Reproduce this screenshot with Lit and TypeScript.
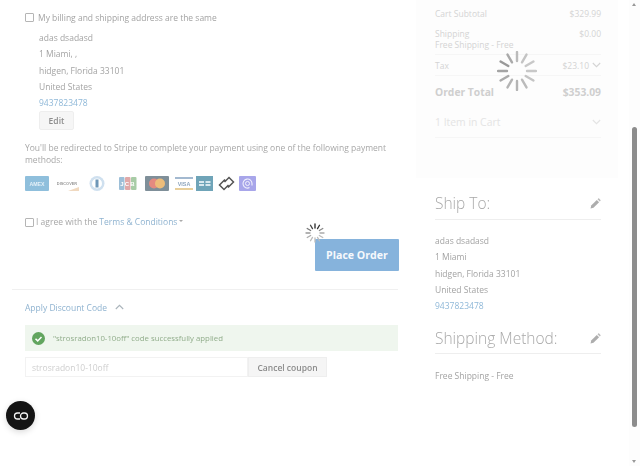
import { LitElement, html, css, svg } from 'lit';
import { customElement } from 'lit/decorators.js';

const spokes = (size: number, w: number, inner: number, outer: number, colors: string[]) => {
  const c = size / 2;
  return html`<svg width=${size} height=${size} viewBox="0 0 ${size} ${size}">
    ${colors.map((col, i) => svg`<line x1=${c} y1=${c - inner} x2=${c} y2=${c - outer} stroke=${col}
      stroke-width=${w} stroke-linecap="round" transform="rotate(${i * 30} ${c} ${c})"></line>`)}
  </svg>`;
};

const pencil = html`<svg class="pencil" width="11" height="11" viewBox="0 0 11 11">
  <path d="M0.5 10.5l.7-3 5.6-5.6 2.3 2.3-5.6 5.6z" fill="#adadad"></path>
  <path d="M7.5 1.2l.8-.7c.3-.2.6-.2.8 0l1.4 1.4c.2.2.2.5 0 .8l-.7.8z" fill="#bbb"></path>
</svg>`;

const chevron = (up = false) => html`<svg width="9" height="6" viewBox="0 0 9 6" style=${up ? 'transform:rotate(180deg)' : ''}>
  <path d="M.8 1l3.7 3.7L8.2 1" fill="none" stroke="currentColor" stroke-width="1.1"></path>
</svg>`;

@customElement('app-root')
class AppRoot extends LitElement {
  static styles = css`
    :host {
      display: block;
      width: 640px;
      height: 466px;
      position: relative;
      overflow: hidden;
      background: #fff;
      font-family: "Open Sans", sans-serif;
      font-size: 8.5px;
      color: #a3a3a3;
    }
    .page { display: flex; height: 466px; filter: blur(0.45px); }
    .main { width: 416px; flex: none; padding: 0 18px 0 12px; box-sizing: border-box; }
    .same { display: flex; align-items: center; gap: 4px; margin: 12px 0 0 13px; height: 11px; }
    .box { width: 7px; height: 7px; border: 1px solid #b5b5b5; border-radius: 1px; flex: none; background: #fff; }
    .addr { margin: 7px 0 0 27px; line-height: 16.3px; }
    .addr a, .ship a { color: #8fb8d8; display: block; }
    .edit { width: 35px; height: 19px; box-sizing: border-box; border: 1px solid #eee; background: #f6f6f6;
      border-radius: 2px; color: #8d8d8d; font-weight: 600; display: flex; align-items: center; justify-content: center; }
    .note { margin: 12px 0 0 13px; line-height: 12px; width: 372px; color: #a8a8a8; }
    .pay { display: flex; align-items: center; margin: 9px 0 0 13px; height: 16px; }
    .pay svg { display: block; flex: none; }
    .agree { display: flex; align-items: center; gap: 2px; margin: 23px 0 0 13px; height: 14px; color: #a6a6a6; }
    .agree a { color: #8fb3d0; }
    .agree .box { margin-top: 2px; }
    .caret { border: 2px solid transparent; border-top-color: #aaa; border-bottom: 0; }
    .actions { display: flex; justify-content: flex-end; margin: 11px -1px 0 0; position: relative; }
    .place { width: 84px; height: 32px; background: #86b3dc; color: #f6f9fc; font-weight: 700; font-size: 10.6px;
      border-radius: 1px; display: flex; align-items: center; justify-content: center; }
    .spin-small { position: absolute; left: 292px; top: -17px; }
    .rule { height: 1px; background: #f0f0f0; margin-top: 18px; }
    .disc-toggle { display: flex; align-items: center; gap: 8px; margin: 10px 0 0 13px; height: 14px; color: #8fb3d0; }
    .disc-toggle svg { color: #aab4bb; }
    .ok { display: flex; align-items: center; gap: 8px; height: 26px; margin: 11px 0 0 13px; padding-left: 7px; background: #eff6ee;
      color: #91ad8b; font-size: 7.8px; }
    .coupon { display: flex; margin: 6px 0 0 13px; height: 20px; }
    .field { width: 223px; box-sizing: border-box; border: 1px solid #f2f2f2; padding-left: 6px; display: flex; align-items: center; color: #cfcfcf; }
    .cancel { width: 79px; box-sizing: border-box; background: #f5f5f5; border: 1px solid #eee; color: #8b8b8b; font-weight: 600;
      display: flex; align-items: center; justify-content: center; }
    .side { width: 202px; flex: none; }
    .summary { position: relative; height: 178px; background: #fdfdfd; padding: 0 17px 0 19px; box-sizing: border-box; color: #d4d4d4; }
    .row { display: flex; justify-content: space-between; align-items: center; }
    .row span { display: flex; align-items: center; gap: 3px; }
    .subtotal { padding-top: 7px; height: 12px; }
    .shipping { margin-top: 8px; height: 12px; }
    .free { line-height: 12px; padding-bottom: 3px; border-bottom: 1px solid #f6f6f6; }
    .tax { height: 20px; border-bottom: 1px solid #f6f6f6; }
    .total { height: 31px; font-size: 10.3px; font-weight: 700; color: #cfcfcf; }
    .items { height: 30px; font-size: 10.4px; color: #e4e4e4; border-bottom: 1px solid #f6f6f6; }
    .spin-big { position: absolute; left: 81px; top: 51px; }
    .ship { padding: 0 17px 0 19px; }
    .head { display: flex; align-items: center; justify-content: space-between; border-bottom: 1px solid #eee; font-size: 15.5px;
      font-weight: 300; color: #a8a8a8; box-sizing: border-box; padding-right: 1px; }
    .head.first { margin-top: 8px; height: 34px; }
    .pencil { margin: 2px -1px 0 0; }
    .lines { margin-top: 13px; line-height: 16.3px; }
    .method { height: 40px; padding-top: 8px; }
    .free-line { margin-top: 16px; line-height: 12px; }
    .chat { position: absolute; left: 6px; top: 401px; width: 29px; height: 29px; border-radius: 50%; background: #141414;
      box-shadow: 0 2px 6px rgba(0, 0, 0, .15); display: flex; align-items: center; justify-content: center; }
    .scroll { position: absolute; right: 0; top: 0; width: 11px; height: 466px; background: #fdfdfd; }
    .thumb { position: absolute; left: 3px; top: 127px; width: 5px; height: 300px; border-radius: 3px; background: #8c8c8c; }
    .arrow { position: absolute; left: 3px; border: 2.5px solid transparent; }
    .arrow.up { top: 3px; border-bottom: 3px solid #999; border-top: 0; }
    .arrow.down { bottom: 3px; border-top: 3px solid #999; border-bottom: 0; }
    .card-text { font-family: "Liberation Sans", sans-serif; font-weight: 700; }
  `;

  private payIcons() {
    return html`<div class="pay">
      <svg width="24" height="15" style="margin-right:6px"><rect width="24" height="15" rx="1" fill="#8fbfdc"></rect><text class="card-text" x="12" y="9.7" font-size="5.2" text-anchor="middle" fill="#e4f0f8">AMEX</text></svg>
      <svg width="24" height="15" style="margin-right:7px"><text class="card-text" x="12" y="8.8" font-size="3.9" text-anchor="middle" fill="#999">DISCOVER</text><path d="M13 15l11-4v4z" fill="#f0d9c0"></path></svg>
      <svg width="24" height="15" style="margin-right:6px"><circle cx="11" cy="7.5" r="7.5" fill="#cfe0ef"></circle><circle cx="11" cy="7.5" r="5" fill="#fff"></circle><rect x="9.5" y="3.5" width="3" height="8" fill="#6e97b8"></rect></svg>
      <svg width="24" height="15" style="margin-right:5px"><rect x="3" y="1" width="5.5" height="13" rx="1" fill="#9dbfd8"></rect><rect x="9" y="1" width="5.5" height="13" rx="1" fill="#e0a8a8"></rect><rect x="15" y="1" width="5.5" height="13" rx="1" fill="#a8cca6"></rect><text class="card-text" x="12" y="10" font-size="6" text-anchor="middle" fill="#fff" letter-spacing="1.2">JCB</text></svg>
      <svg width="24" height="15" style="margin-right:6px"><rect width="24" height="15" rx="1" fill="#7f8f99"></rect><circle cx="9" cy="7.5" r="5" fill="#e58a80"></circle><circle cx="15" cy="7.5" r="5" fill="#eebd7a"></circle></svg>
      <svg width="18" height="15" style="margin-right:3px"><rect y="1" width="18" height="2" fill="#a3b9d0"></rect><rect y="12" width="18" height="2" fill="#e8cf9b"></rect><text class="card-text" x="9" y="9.8" font-size="5.4" text-anchor="middle" fill="#8ea5bd">VISA</text></svg>
      <svg width="17" height="15" style="margin-right:5px"><rect width="17" height="15" fill="#6fa4b8"></rect><rect x="3" y="5" width="5" height="2" fill="#d8e8ee"></rect><rect x="3" y="8" width="5" height="2" fill="#d8e8ee"></rect><rect x="9.5" y="5" width="5" height="2" fill="#d8e8ee"></rect><rect x="9.5" y="8" width="5" height="2" fill="#d8e8ee"></rect></svg>
      <svg width="17" height="15" style="margin-right:4px"><path d="M7 3.5L1.5 9l4.5 4.5L10.5 9M10 11.5L15.5 6 11 1.5 6.5 6" fill="none" stroke="#555" stroke-width="1.5"></path></svg>
      <svg width="17" height="15"><rect width="17" height="15" rx="1" fill="#a8a6ea"></rect><circle cx="8.5" cy="7.5" r="2" fill="none" stroke="#f0f0fc" stroke-width="1"></circle><path d="M10.5 11.6a4.5 4.5 0 1 1 2.5-4v1.9" fill="none" stroke="#f0f0fc" stroke-width="1.1"></path></svg>
    </div>`;
  }

  render() {
    return html`<div class="page">
        <div class="main">
          <div class="same"><div class="box"></div>My billing and shipping address are the same</div>
          <div class="addr">
            adas dsadasd<br />1 Miami, ,<br />hidgen, Florida 33101<br />United States<br />
            <a>9437823478</a>
            <div class="edit">Edit</div>
          </div>
          <div class="note">You'll be redirected to Stripe to complete your payment using one of the following payment methods:</div>
          ${this.payIcons()}
          <div class="agree"><div class="box"></div>I agree with the <a>Terms &amp; Conditions</a><div class="caret"></div></div>
          <div class="actions">
            <div class="spin-small">${spokes(22, 1.3, 5, 9, ['#222', '#333', '#888', '#aaa', '#bbb', '#bbb', '#bbb', '#bbb', '#aaa', '#999', '#777', '#444'])}</div>
            <div class="place">Place Order</div>
          </div>
          <div class="rule"></div>
          <div class="disc-toggle">Apply Discount Code ${chevron(true)}</div>
          <div class="ok">
            <svg width="13" height="13" viewBox="0 0 13 13"><circle cx="6.5" cy="6.5" r="6.5" fill="#62a55f"></circle><path d="M3.5 6.7l2.2 2.2 3.8-4" fill="none" stroke="#fff" stroke-width="1.5"></path></svg>
            "strosradon10-10off" code successfully applied
          </div>
          <div class="coupon"><div class="field">strosradon10-10off</div><div class="cancel">Cancel coupon</div></div>
        </div>
        <div class="side">
          <div class="summary">
            <div class="row subtotal"><span>Cart Subtotal</span><span>$329.99</span></div>
            <div class="row shipping"><span>Shipping</span><span>$0.00</span></div>
            <div class="free">Free Shipping - Free</div>
            <div class="row tax"><span>Tax</span><span>$23.10 ${chevron()}</span></div>
            <div class="row total"><span>Order Total</span><span>$353.09</span></div>
            <div class="row items"><span>1 Item in Cart</span><span>${chevron()}</span></div>
            <div class="spin-big">${spokes(40, 2.4, 10, 19, ['#bbb', '#c4c4c4', '#c8c8c8', '#c8c8c8', '#c4c4c4', '#bbb', '#b4b4b4', '#b4b4b4', '#aaa', '#a4a4a4', '#999', '#aaa'])}</div>
          </div>
          <div class="ship">
            <div class="head first">Ship To:${pencil}</div>
            <div class="lines">adas dsadasd<br />1 Miami<br />hidgen, Florida 33101<br />United States<br /><a>9437823478</a></div>
            <div class="head method">Shipping Method:${pencil}</div>
            <div class="free-line">Free Shipping - Free</div>
          </div>
        </div>
      </div>
      <div class="chat">
        <svg width="16" height="10" viewBox="0 0 16 10"><path d="M7 2H4.5a3 3 0 0 0 0 6H7" fill="none" stroke="#f4f4f4" stroke-width="1.3"></path><rect x="7.5" y="2" width="7" height="6" rx="3" fill="none" stroke="#f4f4f4" stroke-width="1.3"></rect></svg>
      </div>
      <div class="scroll"><div class="arrow up"></div><div class="thumb"></div><div class="arrow down"></div></div>`;
  }
}
